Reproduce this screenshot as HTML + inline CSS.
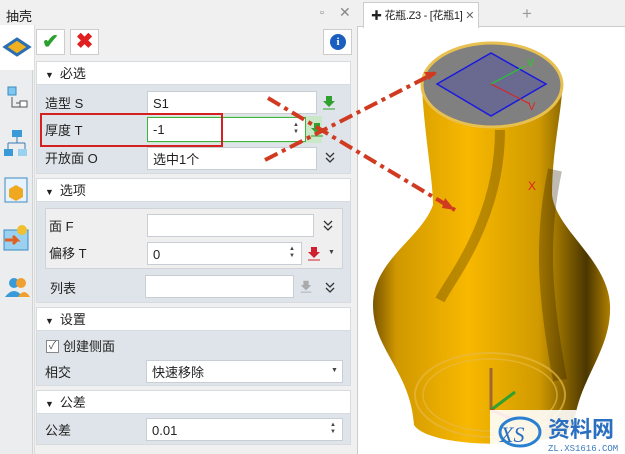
<!DOCTYPE html>
<html><head><meta charset="utf-8"><style>
*{box-sizing:border-box;margin:0;padding:0}
body{width:625px;height:454px;overflow:hidden;background:#f0f0f0;font-family:"Liberation Sans","Noto Sans CJK SC",sans-serif;font-size:13px;color:#222;position:relative}
.a{position:absolute}
.hdr{position:absolute;left:36px;width:315px;height:24px;background:#fff;border:1px solid #d6dbe0;font-size:13px;line-height:15px;padding:4px 0 0 8px}
.hdr b{font-size:9px;font-weight:normal;margin-right:6px}
.body{position:absolute;left:36px;width:315px;background:#dfe4ea;border:1px solid #d6dbe0}
.inp{position:absolute;background:#fff;border:1px solid #c9ced4;height:23px;padding:4px 0 0 5px;font-size:13px;line-height:15px;white-space:nowrap}
.lbl{position:absolute;font-size:13px;line-height:15px}
.sp{position:absolute;font-size:6px;line-height:7px;color:#444}
.dd{position:absolute;width:12px;height:14px}
</style></head><body>
<div class="a" style="left:6px;top:6px;font-size:13px">抽壳</div>
<div class="a" style="left:320px;top:7px;font-size:11px;color:#777">▫</div>
<div class="a" style="left:339px;top:4px;font-size:14px;color:#888">✕</div>
<div class="a" style="left:0;top:25px;width:33px;height:429px;background:#ecedef;border-right:1px solid #cfd3d8"></div>
<div class="a" style="left:0;top:25px;width:34px;height:45px;background:#fff"></div>
<svg class="a" style="left:0;top:25px" width="34" height="300">
<path d="M5 22 L17 14 L29 22 L17 30Z" fill="#f0b020" stroke="#2a6fb0" stroke-width="3"/>
<rect x="8" y="62" width="8" height="8" fill="#7ec8f0" stroke="#3a8ac0"/><path d="M12 72v10h14M16 78h10" stroke="#555" fill="none"/><rect x="20" y="76" width="7" height="6" fill="#fff" stroke="#555"/>
<rect x="12" y="105" width="10" height="7" fill="#3a9ad8"/><rect x="4" y="124" width="9" height="7" fill="#3a9ad8"/><rect x="18" y="124" width="9" height="7" fill="#9ad0f0"/><path d="M17 112v6M8 118h17M8 118v6M25 118v6" stroke="#3a7ab0" fill="none"/>
<rect x="5" y="153" width="22" height="24" fill="#e8f2fb" stroke="#3a8ac0"/><path d="M9 164l7-4 7 4v8l-7 4-7-4z" fill="#f0a820"/>
<rect x="4" y="205" width="24" height="20" fill="#9ad0f0" stroke="#3a8ac0"/><circle cx="22" cy="205" r="5" fill="#f0c030"/><path d="M5 215h12l-4-4M17 215l-4 4" stroke="#e06020" stroke-width="3" fill="none"/>
<circle cx="14" cy="258" r="5" fill="#3a9ad8"/><path d="M5 272q9-12 18 0z" fill="#3a9ad8"/><circle cx="21" cy="258" r="5" fill="#f0a030"/><path d="M18 272q6-10 12 0z" fill="#f0a030"/>
</svg>
<div class="a" style="left:34px;top:25px;width:321px;height:429px;background:#f0f0f0;border-left:1px solid #ddd"></div>
<div class="a" style="left:36px;top:29px;width:29px;height:26px;background:#fff;border:1px solid #ccc;color:#2ca02c;font-size:20px;text-align:center;line-height:24px;font-weight:bold">✔</div>
<div class="a" style="left:70px;top:29px;width:29px;height:26px;background:#fff;border:1px solid #ccc;color:#e02020;font-size:21px;text-align:center;line-height:24px;font-weight:bold">✖</div>
<div class="a" style="left:323px;top:29px;width:29px;height:26px;background:#fff;border:1px solid #ccc"><div style="margin:4px 0 0 6px;width:16px;height:16px;border-radius:50%;background:#1a5fc0;color:#fff;font-size:11px;text-align:center;line-height:16px;font-weight:bold;font-family:'Liberation Serif',serif">i</div></div>

<svg width="0" height="0" style="position:absolute"><defs><symbol id="dd" viewBox="0 0 12 14"><path d="M2 2l4 4 4-4M2 7l4 4 4-4" stroke="#333" stroke-width="1.3" fill="none"/></symbol><symbol id="dl" viewBox="0 0 16 16"><path d="M5 2h6v5h3l-6 6-6-6h3z" fill="currentColor"/><path d="M2 15h12" stroke="currentColor"/></symbol></defs></svg>

<div class="hdr" style="top:61px"><b>▼</b>必选</div>
<div class="body" style="top:84px;height:90px"></div>
<div class="lbl" style="left:45px;top:96px">造型 S</div>
<div class="inp" style="left:147px;top:91px;width:170px">S1</div>
<svg class="a" style="left:321px;top:94px;color:#30a030" width="16" height="16"><use href="#dl"/></svg>
<div class="a" style="left:147px;top:116px;width:175px;height:27px;background:#c8e8c8"></div>
<div class="inp" style="left:147px;top:117px;width:159px;height:25px;border:1px solid #40b040">-1</div>
<div class="sp" style="left:293px;top:122px">▲<br>▼</div>
<svg class="a" style="left:309px;top:121px;color:#30a030" width="16" height="16"><use href="#dl"/></svg>
<div class="lbl" style="left:45px;top:123px">厚度 T</div>
<div class="a" style="left:40px;top:113px;width:183px;height:34px;border:2px solid #d42020"></div>
<div class="lbl" style="left:45px;top:151px">开放面 O</div>
<div class="inp" style="left:147px;top:147px;width:170px">选中1个</div>
<svg class="a dd" style="left:324px;top:151px"><use href="#dd"/></svg>

<div class="hdr" style="top:178px"><b>▼</b>选项</div>
<div class="body" style="top:201px;height:102px"></div>
<div class="a" style="left:45px;top:208px;width:298px;height:61px;background:#efefef;border:1px solid #d0d4d8"></div>
<div class="lbl" style="left:49px;top:219px">面 F</div>
<div class="inp" style="left:147px;top:214px;width:167px">&nbsp;</div>
<svg class="a dd" style="left:322px;top:219px"><use href="#dd"/></svg>
<div class="lbl" style="left:49px;top:246px">偏移 T</div>
<div class="inp" style="left:147px;top:242px;width:155px">0</div>
<div class="sp" style="left:289px;top:246px">▲<br>▼</div>
<svg class="a" style="left:306px;top:245px;color:#d02030" width="16" height="16"><use href="#dl"/></svg>
<div class="a" style="left:328px;top:249px;font-size:7px;color:#444">▼</div>
<div class="lbl" style="left:50px;top:281px">列表</div>
<div class="inp" style="left:145px;top:275px;width:149px">&nbsp;</div>
<svg class="a" style="left:299px;top:279px;color:#aaa" width="14" height="14"><use href="#dl"/></svg>
<svg class="a dd" style="left:324px;top:281px"><use href="#dd"/></svg>

<div class="hdr" style="top:307px"><b>▼</b>设置</div>
<div class="body" style="top:330px;height:56px"></div>
<div class="a" style="left:46px;top:340px;width:13px;height:13px;border:1px solid #888;background:#fff;font-size:11px;line-height:11px;color:#555;text-align:center">✓</div>
<div class="lbl" style="left:63px;top:339px">创建侧面</div>
<div class="lbl" style="left:45px;top:365px">相交</div>
<div class="inp" style="left:146px;top:360px;width:197px">快速移除</div>
<div class="a" style="left:331px;top:367px;font-size:7px;color:#444">▼</div>

<div class="hdr" style="top:390px"><b>▼</b>公差</div>
<div class="body" style="top:413px;height:32px"></div>
<div class="lbl" style="left:45px;top:423px">公差</div>
<div class="inp" style="left:146px;top:418px;width:197px">0.01</div>
<div class="sp" style="left:330px;top:422px">▲<br>▼</div>

<!-- right -->
<div class="a" style="left:357px;top:0;width:268px;height:454px;background:#fff;border-left:1px solid #ccc"></div>
<div class="a" style="left:357px;top:0;width:268px;height:27px;background:#f0f0f0;border-bottom:1px solid #ccc"></div>
<div class="a" style="left:363px;top:2px;width:116px;height:26px;background:#fff;border:1px solid #ccc;border-bottom:none;font-size:11px;line-height:14px;padding:6px 0 0 7px;white-space:nowrap;overflow:hidden;letter-spacing:-0.3px">✚ 花瓶.Z3 - [花瓶1] <span style="color:#666">✕</span></div>
<div class="a" style="left:522px;top:4px;font-size:17px;color:#999">+</div>
<svg class="a" style="left:0;top:0" width="625" height="454">
<defs>
<linearGradient id="g" x1="0" x2="1"><stop offset="0" stop-color="#7a5600"/><stop offset=".1" stop-color="#d09800"/><stop offset=".4" stop-color="#f8b800"/><stop offset=".7" stop-color="#d09a00"/><stop offset=".9" stop-color="#4a3600"/><stop offset="1" stop-color="#b08000"/></linearGradient>
</defs>
<path d="M422 88 C425 140 433 180 433 205 C420 240 373 260 373 305 C373 350 410 370 414 425 C430 450 560 450 574 425 C578 380 612 350 610 305 C608 260 556 230 552 195 C552 150 562 110 562 88 Z" fill="url(#g)"/>
<path d="M500 130 C500 220 450 280 440 300" stroke="#3a2800" stroke-width="10" opacity=".3" fill="none"/>
<path d="M555 170 C540 240 545 300 560 380" stroke="#2a1c00" stroke-width="14" opacity=".3" fill="none"/>
<ellipse cx="492" cy="85" rx="70" ry="42" fill="#808080" stroke="#e8c050" stroke-width="3"/>
<path d="M437 84 L491 53 L546 84 L491 116Z" fill="#6a6a90" stroke="#1a1ae0" stroke-width="1.5"/>
<path d="M491 84 L525 66" stroke="#20d020"/><path d="M491 84 L530 104" stroke="#e02020"/>
<text x="527" y="66" fill="#20d020" font-size="11">V</text><text x="528" y="110" fill="#e02020" font-size="11">V</text>
<ellipse cx="490" cy="395" rx="75" ry="42" fill="none" stroke="#e8b840" stroke-width="2" opacity=".7"/>
<ellipse cx="490" cy="395" rx="67" ry="36" fill="none" stroke="#e8b840" stroke-width="1.5" opacity=".7"/>
<path d="M491 410 V368" stroke="#a06830" stroke-width="3"/><path d="M491 410 L515 392" stroke="#30a030" stroke-width="3"/><path d="M491 410 L515 420" stroke="#e03020" stroke-width="3"/>
<g stroke="#d03a20" stroke-width="4" stroke-dasharray="14 5 4 5" fill="none">
<path d="M268 98 L455 210"/><path d="M265 160 L435 73"/>
</g>
<path d="M455 210 l-10-12 l-3 10z M437 72 l-13 0 l5 8z" fill="#d03a20"/>
<text x="528" y="190" fill="#e02020" font-size="12">X</text>
<rect x="490" y="410" width="135" height="44" fill="#fff" opacity=".9"/>
<ellipse cx="520" cy="432" rx="20" ry="14" fill="none" stroke="#2a80d0" stroke-width="3"/>
<text x="500" y="442" fill="#2a6fc0" font-size="22" font-style="italic" font-family="Liberation Serif">XS</text>
<text x="548" y="437" fill="#2a6fc0" font-size="22" font-weight="bold" font-family="Noto Sans CJK SC">资料网</text>
<text x="548" y="451" fill="#3a7ac0" font-size="9" font-family="Liberation Mono">ZL.XS1616.COM</text>
</svg>
</body></html>
